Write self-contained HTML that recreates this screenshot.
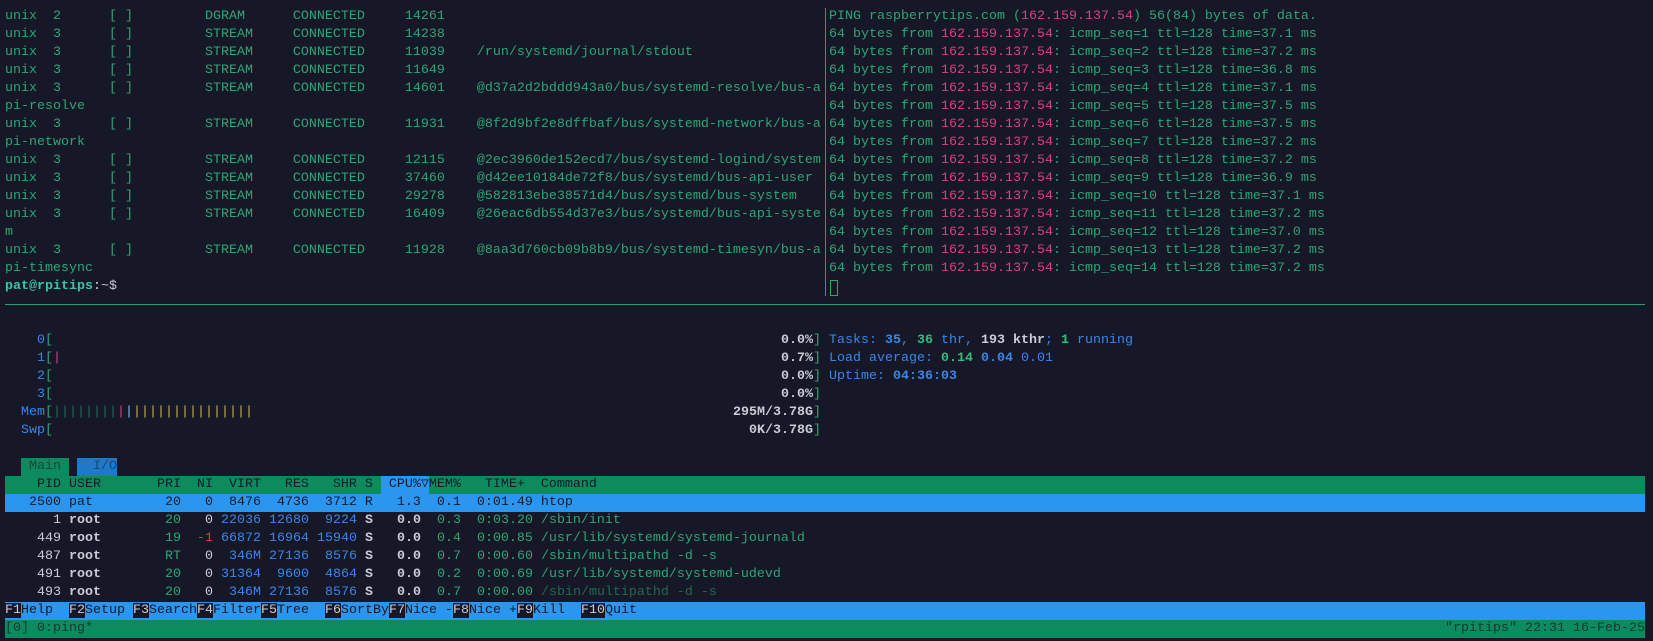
<!DOCTYPE html>
<html><head><meta charset="utf-8">
<style>
html,body{margin:0;padding:0;background:#161828;width:1653px;height:641px;overflow:hidden}
body{font-family:"Liberation Mono","DejaVu Sans Mono",monospace;font-size:13.33px;color:#2fa572;position:relative}
#w{position:absolute;left:0;top:2px;width:1653px;height:639px}
.r{position:absolute;left:5px;height:18px;line-height:18px;white-space:pre}
.p{color:#d2447a}
.g{color:#2fa572}
.b{color:#3a86e8}
.bb{color:#3a86e8;font-weight:bold}
.w{color:#c9ccd4}
.wb{color:#c9ccd4;font-weight:bold}
.gb{color:#2fbf7a;font-weight:bold}
.rd{color:#e0393e}
.k{color:#0d1b2a}
</style></head><body><div id="w">
<div style="position:absolute;left:825px;top:6px;width:1px;height:288px;background:#2a9d6a"></div>
<div style="position:absolute;left:5px;top:302px;width:1640px;height:1px;background:#2a9d6a"></div>

<div class="r" style="top:6px">unix  2      [ ]         DGRAM      CONNECTED     14261</div>
<div class="r" style="top:24px">unix  3      [ ]         STREAM     CONNECTED     14238</div>
<div class="r" style="top:42px">unix  3      [ ]         STREAM     CONNECTED     11039    /run/systemd/journal/stdout</div>
<div class="r" style="top:60px">unix  3      [ ]         STREAM     CONNECTED     11649</div>
<div class="r" style="top:78px">unix  3      [ ]         STREAM     CONNECTED     14601    @d37a2d2bddd943a0/bus/systemd-resolve/bus-a</div>
<div class="r" style="top:96px">pi-resolve</div>
<div class="r" style="top:114px">unix  3      [ ]         STREAM     CONNECTED     11931    @8f2d9bf2e8dffbaf/bus/systemd-network/bus-a</div>
<div class="r" style="top:132px">pi-network</div>
<div class="r" style="top:150px">unix  3      [ ]         STREAM     CONNECTED     12115    @2ec3960de152ecd7/bus/systemd-logind/system</div>
<div class="r" style="top:168px">unix  3      [ ]         STREAM     CONNECTED     37460    @d42ee10184de72f8/bus/systemd/bus-api-user</div>
<div class="r" style="top:186px">unix  3      [ ]         STREAM     CONNECTED     29278    @582813ebe38571d4/bus/systemd/bus-system</div>
<div class="r" style="top:204px">unix  3      [ ]         STREAM     CONNECTED     16409    @26eac6db554d37e3/bus/systemd/bus-api-syste</div>
<div class="r" style="top:222px">m</div>
<div class="r" style="top:240px">unix  3      [ ]         STREAM     CONNECTED     11928    @8aa3d760cb09b8b9/bus/systemd-timesyn/bus-a</div>
<div class="r" style="top:258px">pi-timesync</div>
<div class="r" style="top:276px"><span class="gb" style="color:#35c8a0">pat@rpitips</span><span class="w">:~$</span></div>

<div class="r" style="left:829px;top:6px">PING raspberrytips.com (<span class="p">162.159.137.54</span>) 56(84) bytes of data.</div>
<div class="r" style="left:829px;top:24px">64 bytes from <span class="p">162.159.137.54</span>: icmp_seq=1 ttl=128 time=37.1 ms</div>
<div class="r" style="left:829px;top:42px">64 bytes from <span class="p">162.159.137.54</span>: icmp_seq=2 ttl=128 time=37.2 ms</div>
<div class="r" style="left:829px;top:60px">64 bytes from <span class="p">162.159.137.54</span>: icmp_seq=3 ttl=128 time=36.8 ms</div>
<div class="r" style="left:829px;top:78px">64 bytes from <span class="p">162.159.137.54</span>: icmp_seq=4 ttl=128 time=37.1 ms</div>
<div class="r" style="left:829px;top:96px">64 bytes from <span class="p">162.159.137.54</span>: icmp_seq=5 ttl=128 time=37.5 ms</div>
<div class="r" style="left:829px;top:114px">64 bytes from <span class="p">162.159.137.54</span>: icmp_seq=6 ttl=128 time=37.5 ms</div>
<div class="r" style="left:829px;top:132px">64 bytes from <span class="p">162.159.137.54</span>: icmp_seq=7 ttl=128 time=37.2 ms</div>
<div class="r" style="left:829px;top:150px">64 bytes from <span class="p">162.159.137.54</span>: icmp_seq=8 ttl=128 time=37.2 ms</div>
<div class="r" style="left:829px;top:168px">64 bytes from <span class="p">162.159.137.54</span>: icmp_seq=9 ttl=128 time=36.9 ms</div>
<div class="r" style="left:829px;top:186px">64 bytes from <span class="p">162.159.137.54</span>: icmp_seq=10 ttl=128 time=37.1 ms</div>
<div class="r" style="left:829px;top:204px">64 bytes from <span class="p">162.159.137.54</span>: icmp_seq=11 ttl=128 time=37.2 ms</div>
<div class="r" style="left:829px;top:222px">64 bytes from <span class="p">162.159.137.54</span>: icmp_seq=12 ttl=128 time=37.0 ms</div>
<div class="r" style="left:829px;top:240px">64 bytes from <span class="p">162.159.137.54</span>: icmp_seq=13 ttl=128 time=37.2 ms</div>
<div class="r" style="left:829px;top:258px">64 bytes from <span class="p">162.159.137.54</span>: icmp_seq=14 ttl=128 time=37.2 ms</div>
<div style="position:absolute;left:830px;top:278px;width:6px;height:14px;border:1px solid #2fa572"></div>

<div class="r" style="top:330px"><span class="b">    0</span><span class="g">[</span></div>
<div class="r" style="top:348px"><span class="b">    1</span><span class="g">[</span><span style="color:#d2447a">|</span></div>
<div class="r" style="top:366px"><span class="b">    2</span><span class="g">[</span></div>
<div class="r" style="top:384px"><span class="b">    3</span><span class="g">[</span></div>
<div class="r" style="top:402px"><span class="b">  Mem</span><span class="g">[</span><span style="color:#2a6a58">||||||||</span><span style="color:#d2447a">|</span><span style="color:#8ab8f0">|</span><span style="color:#c8b04a">|||||||||||||||</span></div>
<div class="r" style="top:420px"><span class="b">  Swp</span><span class="g">[</span></div>
<div class="r" style="left:5px;top:330px;width:816px;text-align:right"><span class="wb">0.0%</span><span class="g">]</span></div>
<div class="r" style="left:5px;top:348px;width:816px;text-align:right"><span class="wb">0.7%</span><span class="g">]</span></div>
<div class="r" style="left:5px;top:366px;width:816px;text-align:right"><span class="wb">0.0%</span><span class="g">]</span></div>
<div class="r" style="left:5px;top:384px;width:816px;text-align:right"><span class="wb">0.0%</span><span class="g">]</span></div>
<div class="r" style="left:5px;top:402px;width:816px;text-align:right"><span class="wb">295M/3.78G</span><span class="g">]</span></div>
<div class="r" style="left:5px;top:420px;width:816px;text-align:right"><span class="wb">0K/3.78G</span><span class="g">]</span></div>
<div class="r" style="left:829px;top:330px"><span class="b">Tasks: </span><span class="bb">35</span><span class="b">, </span><span class="gb">36</span><span class="b"> thr, </span><span class="wb">193 kthr</span><span class="b">; </span><span class="gb">1</span><span class="b"> running</span></div>
<div class="r" style="left:829px;top:348px"><span class="b">Load average: </span><span class="gb">0.14 </span><span class="bb">0.04 </span><span class="b">0.01</span></div>
<div class="r" style="left:829px;top:366px"><span class="b">Uptime: </span><span class="bb">04:36:03</span></div>

<div style="position:absolute;left:21px;top:456px;width:48px;height:18px;background:#0e8a5f"></div>
<div style="position:absolute;left:77px;top:456px;width:40px;height:18px;background:#1f78c8"></div>
<div class="r" style="top:456px"><span style="color:#0f4a3a">   Main </span><span style="color:#15487a">   I/O</span></div>

<div style="position:absolute;left:5px;top:474px;width:1640px;height:18px;background:#0e8a5f"></div>
<div style="position:absolute;left:381px;top:474px;width:48px;height:18px;background:#2a96f0"></div>
<div class="r k" style="top:474px">    PID USER       PRI  NI  VIRT   RES   SHR S  CPU%▽MEM%   TIME+  Command</div>

<div style="position:absolute;left:5px;top:492px;width:1640px;height:18px;background:#2a96f0"></div>
<div class="r k" style="top:492px">   2500 pat         20   0  8476  4736  3712 R   1.3  0.1  0:01.49 htop</div>

<div class="r" style="top:510px"><span class="w">      1 </span><span class="wb">root      </span><span class="g">  20 </span><span class="w">  0 </span><span class="b">22036 12680 </span><span class="b"> 9224 </span><span class="wb">S </span><span class="wb">  0.0 </span><span class="g"> 0.3  0:03.20 /sbin/init</span></div>
<div class="r" style="top:528px"><span class="w">    449 </span><span class="wb">root      </span><span class="g">  19 </span><span class="rd"> -1 </span><span class="b">66872 16964 15940 </span><span class="wb">S </span><span class="wb">  0.0 </span><span class="g"> 0.4  0:00.85 /usr/lib/systemd/systemd-journald</span></div>
<div class="r" style="top:546px"><span class="w">    487 </span><span class="wb">root      </span><span class="g">  RT </span><span class="w">  0 </span><span class="b"> 346M 27136 </span><span class="b"> 8576 </span><span class="wb">S </span><span class="wb">  0.0 </span><span class="g"> 0.7  0:00.60 /sbin/multipathd -d -s</span></div>
<div class="r" style="top:564px"><span class="w">    491 </span><span class="wb">root      </span><span class="g">  20 </span><span class="w">  0 </span><span class="b">31364  9600 </span><span class="b"> 4864 </span><span class="wb">S </span><span class="wb">  0.0 </span><span class="g"> 0.2  0:00.69 /usr/lib/systemd/systemd-udevd</span></div>
<div class="r" style="top:582px"><span class="w">    493 </span><span class="wb">root      </span><span class="g">  20 </span><span class="w">  0 </span><span class="b"> 346M 27136 </span><span class="b"> 8576 </span><span class="wb">S </span><span class="wb">  0.0 </span><span class="g"> 0.7  0:00.00 </span><span style="color:#1f6a50">/sbin/multipathd -d -s</span></div>

<div style="position:absolute;left:5px;top:600px;width:1640px;height:18px;background:#2a96f0"></div>
<div class="r" style="top:600px"><span class="w" style="background:#161828">F1</span><span class="k">Help  </span><span class="w" style="background:#161828">F2</span><span class="k">Setup </span><span class="w" style="background:#161828">F3</span><span class="k">Search</span><span class="w" style="background:#161828">F4</span><span class="k">Filter</span><span class="w" style="background:#161828">F5</span><span class="k">Tree  </span><span class="w" style="background:#161828">F6</span><span class="k">SortBy</span><span class="w" style="background:#161828">F7</span><span class="k">Nice -</span><span class="w" style="background:#161828">F8</span><span class="k">Nice +</span><span class="w" style="background:#161828">F9</span><span class="k">Kill  </span><span class="w" style="background:#161828">F10</span><span class="k">Quit</span></div>

<div style="position:absolute;left:5px;top:618px;width:1640px;height:18px;background:#0e8a5f"></div>
<div class="r" style="top:618px;color:#0f3a2e">[0] 0:ping*</div>
<div class="r" style="top:618px;left:5px;width:1640px;text-align:right;color:#0f3a2e">"rpitips" 22:31 16-Feb-25</div>
</div></body></html>
